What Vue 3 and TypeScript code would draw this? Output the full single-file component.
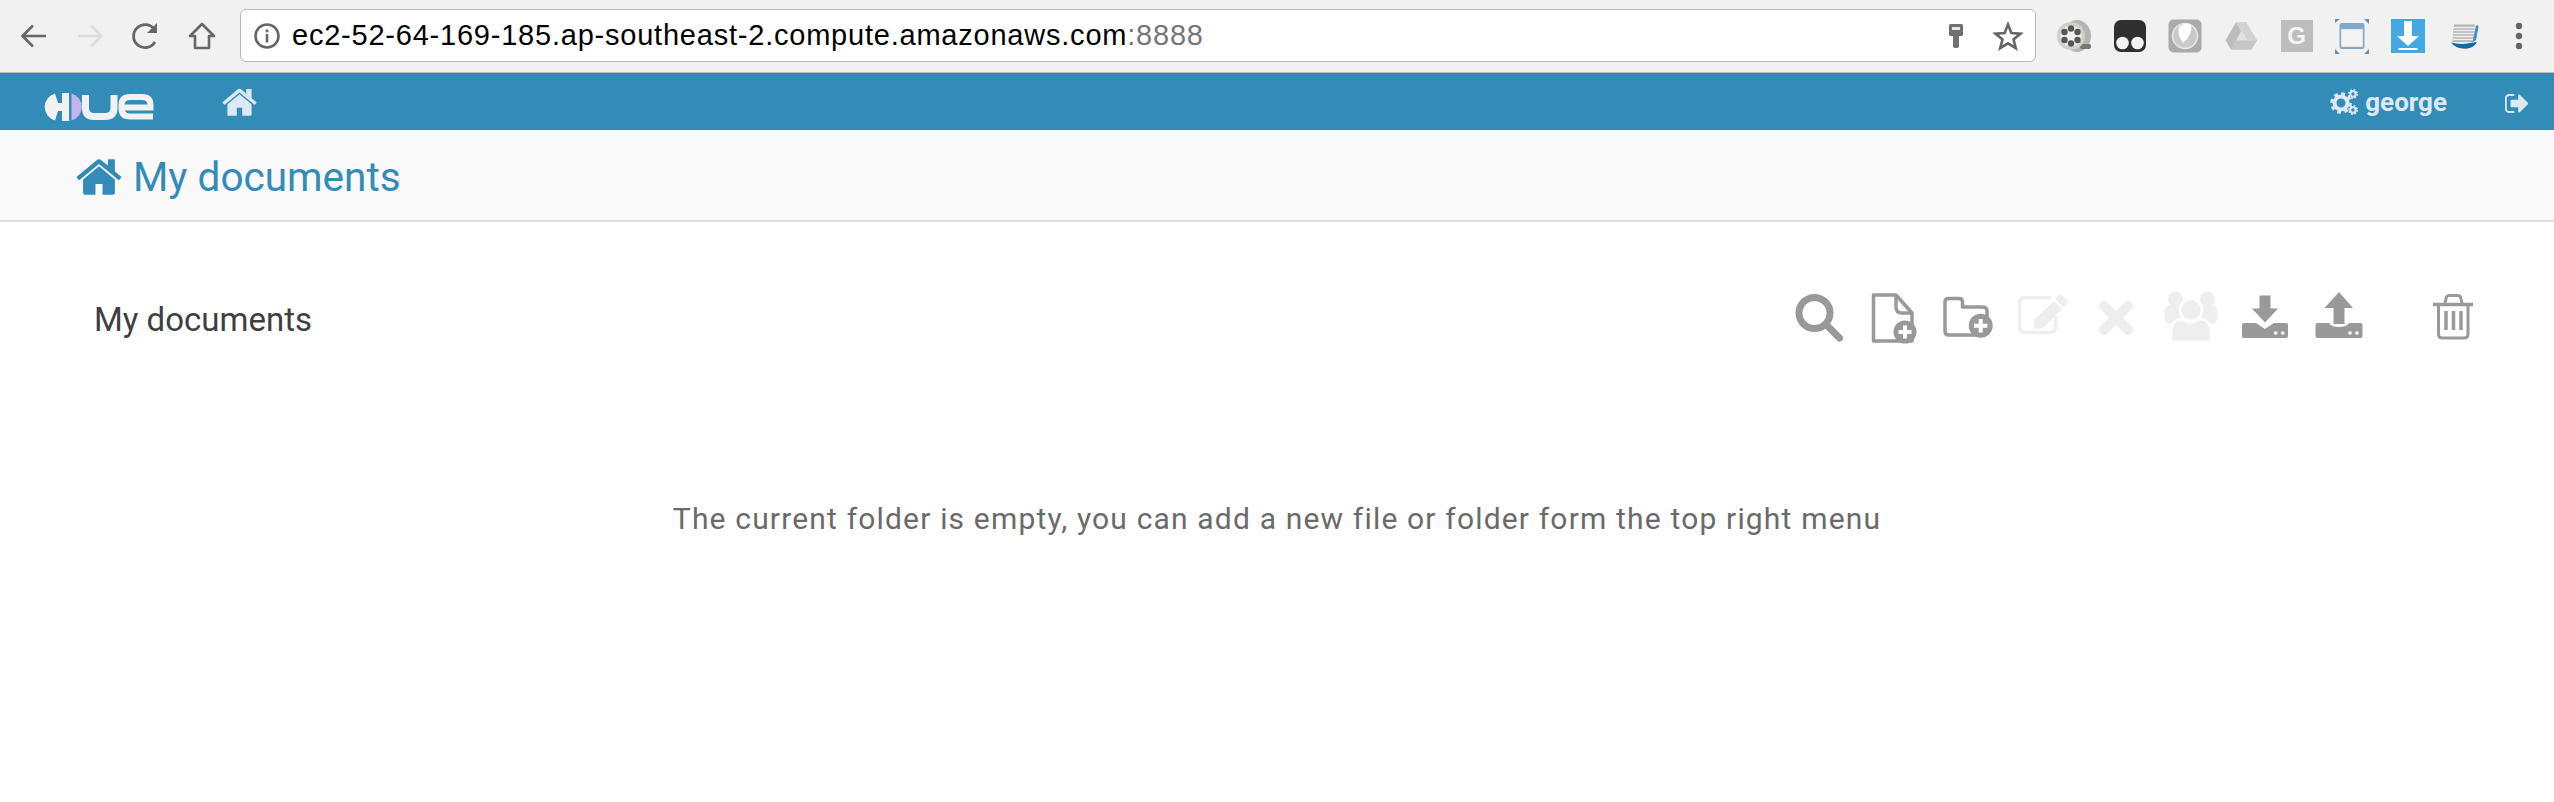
<script setup lang="ts">
const homePath =
  'M1472 992v480q0 26-19 45t-45 19h-384v-384h-256v384h-384q-26 0-45-19t-19-45v-480q0-1 .5-3t.5-3l575-474 575 474q1 2 1 6zm223-69l-62 74q-8 9-21 11h-3q-13 0-21-7l-692-577-692 577q-12 8-24 7-13-2-21-11l-62-74q-8-10-7-23.500t11-21.500l719-599q32-26 76-26t76 26l244 204v-195q0-14 9-23t23-9h192q14 0 23 9t9 23v408l219 182q10 8 11 21.500t-7 23.500z'
const signOutPath =
  'M704 1440q0 4 1 20t.5 26.500-3 23.500-10 19.500-20.500 6.500h-320q-119 0-203.500-84.500t-84.500-203.500v-704q0-119 84.500-203.500t203.500-84.500h320q13 0 22.500 9.500t9.500 22.500q0 4 1 20t.5 26.500-3 23.500-10 19.500-20.500 6.500h-320q-66 0-113 47t-47 113v704q0 66 47 113t113 47h312l11.500 1 11.500 3 8 5.500 7 9 2 13.500zm928-544q0 26-19 45l-544 544q-19 19-45 19t-45-19-19-45v-288h-448q-26 0-45-19t-19-45v-384q0-26 19-45t45-19h448v-288q0-26 19-45t45-19 45 19l544 544q19 19 19 45z'
const host: string = 'ec2-52-64-169-185.ap-southeast-2.compute.amazonaws.com'
const port: string = ':8888'
const pageTitle: string = 'My documents'
</script>

<template>
  <div class="page">
    <header class="chrome">
      <div class="nav-btn">
        <svg class="c-icon" viewBox="0 0 30 30" fill="none" stroke="#666" stroke-width="2.6"><path d="M27 15H4M14 4.500 3.500 15 14 25.500" /></svg>
      </div>
      <div class="nav-btn">
        <svg class="c-icon" viewBox="0 0 30 30" fill="none" stroke="#dcdcdc" stroke-width="2.6"><path d="M3 15h23M16 4.500 26.500 15 16 25.500" /></svg>
      </div>
      <div class="nav-btn">
        <svg class="c-icon" viewBox="0 0 30 30" fill="none" stroke="#666" stroke-width="2.8"><path d="M24 21a11.500 11.500 0 1 1-.5-12.500" /><path d="M26 2v10H16z" fill="#666" stroke="none" /></svg>
      </div>
      <div class="nav-btn">
        <svg class="c-icon" viewBox="0 0 30 30" fill="none" stroke="#666" stroke-width="2.6" stroke-linejoin="round"><path d="M15 3 3 15h5v12h14V15h5z" /></svg>
      </div>

      <div class="omnibox">
        <svg class="info" viewBox="0 0 28 28" fill="none"><circle cx="14" cy="14" r="11.500" stroke="#666" stroke-width="2.600" /><rect x="12.700" y="12" width="2.600" height="8.500" fill="#666" /><rect x="12.700" y="7.500" width="2.600" height="2.800" fill="#666" /></svg>
        <span class="url">{{ host }}<span class="port">{{ port }}</span></span>
        <svg class="key" viewBox="0 0 18 24"><path d="M2 1.500Q2 0 3.500 0h11Q16 0 16 1.500v9Q16 12 14.500 12H12v10q0 2-3 2t-3-2V12H3.500Q2 12 2 10.500z" fill="#707070" /><rect x="5" y="3" width="8" height="3" fill="#e8e8e8" /></svg>
        <svg class="star" viewBox="0 0 30 30" fill="none"><path d="M15 3.500 18.400 12 27.500 12.600 20.500 18.400 22.800 27.200 15 22.400 7.200 27.200 9.500 18.400 2.500 12.600 11.600 12z" stroke="#666" stroke-width="2.600" stroke-linejoin="miter" /></svg>
      </div>

      <div class="extensions">
        <div class="ext">
          <svg class="ext-svg" viewBox="0 0 36 36">
            <ellipse cx="21" cy="18" rx="14" ry="16" fill="#b5b5b0" />
            <rect x="24" y="26" width="11" height="5" rx="2" fill="#777" />
            <circle cx="15" cy="18" r="14" fill="#cfcfcb" />
            <circle cx="15" cy="18" r="10.500" fill="#efefed" />
            <circle cx="15" cy="10.500" r="3.200" fill="#555" /><circle cx="15" cy="25.500" r="3.200" fill="#555" /><circle cx="8.500" cy="14" r="3.200" fill="#555" /><circle cx="21.500" cy="14" r="3.200" fill="#555" /><circle cx="8.500" cy="22" r="3.200" fill="#555" /><circle cx="21.500" cy="22" r="3.200" fill="#555" />
          </svg>
        </div>
        <div class="ext">
          <svg class="ext-svg" viewBox="0 0 36 36">
            <rect x="2" y="2" width="32" height="32" rx="7" fill="#2f2f2f" />
            <circle cx="10.500" cy="25" r="6.300" fill="#f2f2f2" /><circle cx="25.500" cy="25" r="6.300" fill="#f2f2f2" />
          </svg>
        </div>
        <div class="ext">
          <svg class="ext-svg" viewBox="0 0 36 36">
            <rect x="1.500" y="1.500" width="33" height="33" rx="5" fill="#aaa" />
            <circle cx="18" cy="18" r="12.500" fill="#c9c9c9" stroke="#e8e8e8" stroke-width="1.500" />
            <path d="M12 9Q18 3 24 7q2 9-8 18-6-8-4-16z" fill="#fff" />
          </svg>
        </div>
        <div class="ext">
          <svg class="ext-svg" viewBox="0 0 36 36">
            <path d="M18.200 13 13 22.300H24.200z" fill="#e2e2e2" />
            <path d="M13.200 4 18.200 13 8.200 31.700 2.500 22.300z" fill="#bdbdbd" />
            <path d="M13.200 4H23.200L34.200 22.300H24.200z" fill="#d2d2d2" />
            <path d="M13 22.300H34.200L28.200 31.700H8.200z" fill="#c6c6c6" />
          </svg>
        </div>
        <div class="ext">
          <div class="g-tile">G</div>
        </div>
        <div class="ext">
          <svg class="ext-svg" viewBox="0 0 36 36">
            <rect x="5.500" y="5" width="25" height="26" rx="2" fill="#7ea9cc" />
            <rect x="7" y="11" width="22" height="18" fill="#f4f4f4" stroke="#aac" stroke-width=".5" />
            <path d="M1 5V1h5zM30 1h5v5zM1 31v5h5zM35 31v5h-5z" fill="#5b94c4" />
          </svg>
        </div>
        <div class="ext">
          <svg class="ext-svg" viewBox="0 0 36 36">
            <rect x="1" y="1" width="34" height="34" fill="#44a9e2" />
            <path d="M14 3h8v15h7L18 28 7 18h7z" fill="#fff" />
            <rect x="8.500" y="30" width="19" height="2" fill="#fff" />
          </svg>
        </div>
        <div class="ext">
          <svg class="ext-svg" viewBox="0 0 36 36">
            <path d="M8 6.500H29L27 24H6.500z" fill="#b4b4b4" />
            <path d="M8 9.500H29M8 12.500H28.500M7.500 15.500H28M7 18.500H27.500M7 21.500H27" stroke="#f0f0f0" stroke-width="1.300" />
            <path d="M30 7.500q2.500-1 2.500 1.500l-2.500 13-3.500 2z" fill="#3d8fc9" />
            <path d="M5 24.500Q14 27 24 25L31 24Q28 30 20 30.700 10 31 5 24.500z" fill="#106aa8" />
          </svg>
        </div>
        <div class="ext">
          <svg class="dots" viewBox="0 0 8 28"><circle cx="4" cy="4" r="3.200" fill="#666" /><circle cx="4" cy="14" r="3.200" fill="#666" /><circle cx="4" cy="24" r="3.200" fill="#666" /></svg>
        </div>
      </div>
    </header>

    <nav class="hue-bar">
      <svg class="logo" viewBox="0 0 112 30" fill="none">
        <path d="M12 1.500A14 14 0 0 0 12 28.500L15 19H19V11H15z" fill="#f1f1f1" />
        <rect x="19" y="1" width="7" height="28" fill="#f1f1f1" />
        <path d="M28.500 1.500A14 14 0 0 1 28.500 28.500z" fill="#c4b4ee" />
        <path d="M42.500 3V16Q42.500 24.500 51 24.500H62Q71 24.500 71 16V3" stroke="#f1f1f1" stroke-width="7" />
        <path d="M110 24.500H87Q78.500 24.500 78.500 16V13Q78.500 5 87 5H99Q107.500 5 107.500 13V15.500H79" stroke="#f1f1f1" stroke-width="6" />
      </svg>
      <svg class="nav-home" viewBox="64 224 1664 1312"><path :d="homePath" /></svg>
      <div class="user">
        <svg class="gears" viewBox="0 0 28 26" fill="none">
          <circle cx="11" cy="14" r="6.500" stroke="#dce9f3" stroke-width="4" />
          <circle cx="11" cy="14" r="9.300" stroke="#dce9f3" stroke-width="3" stroke-dasharray="3.700 3.600" />
          <circle cx="23" cy="5" r="2.700" stroke="#dce9f3" stroke-width="2" />
          <circle cx="23" cy="5" r="4.200" stroke="#dce9f3" stroke-width="1.600" stroke-dasharray="1.800 1.500" />
          <circle cx="23" cy="21" r="2.700" stroke="#dce9f3" stroke-width="2" />
          <circle cx="23" cy="21" r="4.200" stroke="#dce9f3" stroke-width="1.600" stroke-dasharray="1.800 1.500" />
        </svg>
        <span class="username">george</span>
      </div>
      <svg class="signout" viewBox="128 256 1504 1280"><path :d="signOutPath" /></svg>
    </nav>

    <div class="sub-header">
      <svg class="title-home" viewBox="64 224 1664 1312"><path :d="homePath" /></svg>
      <h1 class="title">{{ pageTitle }}</h1>
    </div>

    <main class="content">
      <div class="toolbar-row">
        <h2 class="folder-name">{{ pageTitle }}</h2>
        <div class="toolbar">
          <button class="tool">
            <svg viewBox="0 0 60 60" fill="none" stroke="#999">
              <circle cx="25.500" cy="27" r="15.500" stroke-width="7" />
              <path d="M39.500 41 50.500 52" stroke-width="7" stroke-linecap="round" />
            </svg>
          </button>
          <button class="tool">
            <svg viewBox="0 0 60 60" fill="none" stroke="#999" stroke-width="3.500" stroke-linejoin="round">
              <path d="M9.500 9H32L48 27V55H9.500z" />
              <path d="M32 9V21Q32 27 38 27H48" />
              <circle cx="41" cy="46" r="11.500" fill="#999" stroke="none" />
              <path d="M34.500 46H47.500M41 39.500V52.500" stroke="#fff" stroke-width="4" />
            </svg>
          </button>
          <button class="tool">
            <svg viewBox="0 0 60 60" fill="none" stroke="#999" stroke-width="3.500" stroke-linejoin="round">
              <path d="M7 16Q7 12.500 10.500 12.500H21Q24.500 12.500 24.500 16V21H44Q49 21 49 25V44Q49 49 44 49H10.500Q7 49 7 45z" />
              <circle cx="42.700" cy="39.700" r="12" fill="#999" stroke="none" />
              <path d="M36 39.700H49.400M42.700 33V46.400" stroke="#fff" stroke-width="4" />
            </svg>
          </button>
          <button class="tool">
            <svg viewBox="0 0 60 60" fill="none" stroke="#eee" stroke-width="3.500">
              <path d="M39 11.500H13Q7.500 11.500 7.500 17V41Q7.500 46.500 13 46.500H38Q43.500 46.500 43.500 41V30" />
              <path d="M22 42.500V34L42 15 50 23 30.500 42.500z" fill="#eee" stroke="none" />
              <path d="M44.500 12.500 48 9 55 16 51.500 20z" fill="#eee" stroke="#eee" stroke-width="2" stroke-linejoin="round" />
            </svg>
          </button>
          <button class="tool">
            <svg viewBox="0 0 60 60" fill="none" stroke="#eee" stroke-width="10" stroke-linecap="round">
              <path d="M18 20 42 44M42 20 18 44" />
            </svg>
          </button>
          <button class="tool">
            <svg viewBox="0 0 60 60" fill="#eee">
              <circle cx="14.500" cy="13" r="7.500" />
              <circle cx="46.500" cy="13" r="7.500" />
              <rect x="3.500" y="19" width="17" height="19" rx="6" />
              <rect x="39.500" y="19" width="17" height="19" rx="6" />
              <circle cx="30" cy="24" r="11" stroke="#fff" stroke-width="2.500" />
              <path d="M10 55V47Q10 33 22 33Q30 40 38 33Q50 33 50 47V55Q50 56 47 56H13Q10 56 10 55z" stroke="#fff" stroke-width="2.500" />
            </svg>
          </button>
          <button class="tool">
            <svg viewBox="0 0 60 60" fill="#999">
              <path d="M9 37H21L30 43 39 37H51Q53 37 53 39V50Q53 52 51 52H9Q7 52 7 50V39Q7 37 9 37z" />
              <path d="M24 9H36V22H44L30 37 16 22H24z" stroke="#fff" stroke-width="1" />
              <circle cx="40.700" cy="47" r="1.800" fill="#fff" /><circle cx="47.700" cy="47" r="1.800" fill="#fff" />
            </svg>
          </button>
          <button class="tool">
            <svg viewBox="0 0 60 60" fill="#999">
              <path d="M8.500 37H20Q22 41 30 41Q38 41 40 37H51.500Q53.500 37 53.500 39V50Q53.500 52 51.500 52H8.500Q6.500 52 6.500 50V39Q6.500 37 8.500 37z" />
              <path d="M30 6 44 22H35.500V38H24.500V22H15.500z" />
              <circle cx="41" cy="47" r="1.800" fill="#fff" /><circle cx="48" cy="47" r="1.800" fill="#fff" />
            </svg>
          </button>
          <button class="tool trash">
            <svg viewBox="0 0 60 60" fill="none" stroke="#999" stroke-width="3">
              <path d="M10 18.500H50" stroke-width="3.500" />
              <path d="M22 17 23.500 11Q24 9.500 26 9.500H35Q37 9.500 37.500 11L39 17" />
              <path d="M15.500 19V48Q15.500 52 19.500 52H41Q45 52 45 48V19" />
              <path d="M23 25V44M30.500 25V44M38 25V44" stroke-width="3.500" />
            </svg>
          </button>
        </div>
      </div>
      <p class="empty">The current folder is empty, you can add a new file or folder form the top right menu</p>
    </main>
  </div>
</template>

<style>
html, body { background: #fff; }
</style>

<style scoped>
.page {
  width: 2554px;
  min-height: 802px;
  background: #fff;
  font-family: Roboto, "Liberation Sans", sans-serif;
  overflow: hidden;
}
.chrome {
  display: flex;
  align-items: flex-start;
  height: 63px;
  padding: 9px 0 0 6px;
  background: #f1f1f1;
  border-bottom: 1px solid #bdbdbd;
}
.nav-btn {
  width: 56px;
  height: 53px;
  display: flex;
  align-items: center;
  justify-content: center;
}
.c-icon { width: 30px; height: 30px; }
.omnibox {
  width: 1796px;
  height: 53px;
  margin-left: 10px;
  box-sizing: border-box;
  display: flex;
  align-items: center;
  padding: 0 12px;
  background: #fff;
  border: 1px solid #b9b9b9;
  border-radius: 6px;
}
.info { width: 28px; height: 28px; flex: none; }
.url {
  margin-left: 11px;
  font-family: "Liberation Sans", Arial, sans-serif;
  font-size: 29px;
  letter-spacing: 0.78px;
  color: #000;
  white-space: nowrap;
}
.port { color: #777; }
.key { width: 18px; height: 24px; margin-left: auto; }
.star { width: 30px; height: 30px; margin-left: 28px; }
.extensions {
  display: flex;
  margin-left: 10px;
}
.ext {
  width: 55.7px;
  height: 53px;
  display: flex;
  align-items: center;
  justify-content: center;
}
.ext-svg { width: 36px; height: 36px; }
.g-tile {
  width: 32px;
  height: 32px;
  background: #bdbdbd;
  color: #f4f4f4;
  font: bold 24px/32px "Liberation Sans", sans-serif;
  text-align: center;
}
.dots { width: 8px; height: 28px; }
.hue-bar {
  display: flex;
  align-items: flex-start;
  height: 57px;
  background: #338bb8;
}
.logo { width: 112px; height: 30px; margin: 19px 0 0 43px; flex: none; }
.nav-home { width: 35px; height: 28px; margin: 15px 0 0 67px; fill: #dce9f3; flex: none; }
.user {
  display: flex;
  align-items: center;
  gap: 7px;
  margin-left: auto;
  height: 57px;
}
.gears { width: 28px; height: 26px; }
.username {
  font-size: 26px;
  font-weight: 700;
  color: #dce9f3;
}
.signout { width: 24px; height: 19px; margin: 21px 25px 0 58px; fill: #dce9f3; flex: none; }
.sub-header {
  display: flex;
  align-items: center;
  height: 90px;
  padding-left: 76px;
  background: #f9f9f9;
  border-bottom: 2px solid #ddd;
}
.title-home { width: 46px; height: 37px; margin-top: 2px; fill: #338bb8; flex: none; }
.title {
  margin: 4px 0 0 11px;
  font-size: 40.5px;
  font-weight: 400;
  color: #338bb8;
}
.toolbar-row {
  display: flex;
  align-items: center;
  justify-content: space-between;
  padding: 64px 64px 0 94px;
}
.folder-name {
  margin: 6px 0 0;
  font-size: 33px;
  font-weight: 400;
  color: #3f3f3f;
}
.toolbar { display: flex; }
.tool {
  width: 74.3px;
  height: 60px;
  padding: 0;
  border: 0;
  background: none;
  display: flex;
  align-items: center;
  justify-content: center;
}
.tool svg { width: 60px; height: 60px; }
.trash { margin-left: 39.2px; }
.empty {
  margin: 155px 0 0;
  text-align: center;
  font-size: 30px;
  letter-spacing: 1.17px;
  color: #6a6a6a;
}
</style>
